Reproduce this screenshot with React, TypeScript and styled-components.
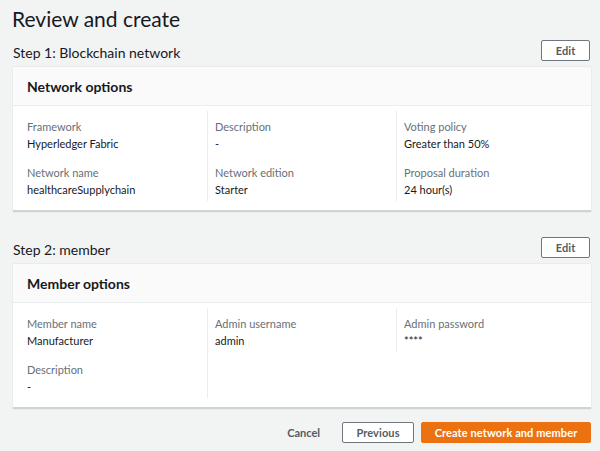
import React from 'react';
import styled, { createGlobalStyle } from 'styled-components';

interface Field {
  label: string;
  value: string;
}

interface Section {
  step: string;
  title: string;
  columns: Field[][];
}

const sections: Section[] = [
  {
    step: 'Step 1: Blockchain network',
    title: 'Network options',
    columns: [
      [
        { label: 'Framework', value: 'Hyperledger Fabric' },
        { label: 'Network name', value: 'healthcareSupplychain' },
      ],
      [
        { label: 'Description', value: '-' },
        { label: 'Network edition', value: 'Starter' },
      ],
      [
        { label: 'Voting policy', value: 'Greater than 50%' },
        { label: 'Proposal duration', value: '24 hour(s)' },
      ],
    ],
  },
  {
    step: 'Step 2: member',
    title: 'Member options',
    columns: [
      [
        { label: 'Member name', value: 'Manufacturer' },
        { label: 'Description', value: '-' },
      ],
      [{ label: 'Admin username', value: 'admin' }],
      [{ label: 'Admin password', value: '****' }],
    ],
  },
];

export default function App() {
  return (
    <>
      <GlobalStyle />
      <Page>
        <PageTitle>Review and create</PageTitle>
        {sections.map((s) => (
          <StepBlock key={s.step}>
            <StepHeader>
              <StepTitle>{s.step}</StepTitle>
              <Button>Edit</Button>
            </StepHeader>
            <Card>
              <CardHeader>{s.title}</CardHeader>
              <CardBody>
                {s.columns.map((col, i) => (
                  <Column key={i} $first={i === 0} $stretch={i < 2}>
                    {col.map((f) => (
                      <Item key={f.label}>
                        <Label>{f.label}</Label>
                        <Value>{f.value}</Value>
                      </Item>
                    ))}
                  </Column>
                ))}
              </CardBody>
            </Card>
          </StepBlock>
        ))}
        <Footer>
          <LinkButton>Cancel</LinkButton>
          <Button $wide>Previous</Button>
          <Button $primary>Create network and member</Button>
        </Footer>
      </Page>
    </>
  );
}

const GlobalStyle = createGlobalStyle`
  html, body {
    margin: 0;
    padding: 0;
    background: #f2f3f3;
  }
  body {
    font-family: Lato, "Open Sans", Arial, sans-serif;
    color: #16191f;
  }
`;

const Page = styled.div`
  padding: 6px 9px 0 13px;
  height: 451px;
  box-sizing: border-box;
`;

const PageTitle = styled.h1`
  margin: 0 0 0 -1px;
  font-size: 21px;
  font-weight: 400;
  line-height: 26px;
  color: #16191f;
`;

const StepBlock = styled.section`
  margin-top: 8px;
  & + & {
    margin-top: 25px;
  }
`;

const StepHeader = styled.div`
  display: flex;
  align-items: flex-end;
  justify-content: space-between;
  padding-right: 1px;
  margin-bottom: 6px;
`;

const StepTitle = styled.h2`
  margin: 0 0 -1px;
  font-size: 14px;
  font-weight: 400;
  line-height: 18px;
`;

const Button = styled.button<{ $primary?: boolean; $wide?: boolean }>`
  height: 21px;
  padding: 0 ${(p) => (p.$primary ? '12px' : '8px')};
  width: ${(p) => (p.$primary ? '170px' : p.$wide ? '72px' : '49px')};
  border-radius: 2px;
  border: 1px solid ${(p) => (p.$primary ? '#ec7211' : '#6f767e')};
  background: ${(p) => (p.$primary ? '#ec7211' : '#fff')};
  color: ${(p) => (p.$primary ? '#fff' : '#545b64')};
  font-family: Lato, "Open Sans", Arial, sans-serif;
  font-size: 11px;
  font-weight: 700;
  letter-spacing: 0.1px;
  cursor: pointer;
`;

const LinkButton = styled.button`
  border: 0;
  background: none;
  padding: 0;
  margin-right: 15px;
  color: #545b64;
  font-family: Lato, "Open Sans", Arial, sans-serif;
  font-size: 11px;
  font-weight: 700;
  cursor: pointer;
`;

const Card = styled.div`
  background: #fff;
  border-bottom: 2px solid #d0d3d3;
  box-shadow: 0 0 1px rgba(0, 28, 36, 0.2);
`;

const CardHeader = styled.div`
  background: #fafafa;
  border-bottom: 1px solid #eaeded;
  height: 38px;
  display: flex;
  align-items: center;
  padding: 0 14px;
  font-size: 14px;
  font-weight: 700;
`;

const CardBody = styled.div`
  display: grid;
  grid-template-columns: 180px 189px 1fr;
  align-items: start;
  padding: 5px 14px 9px;
`;

const Column = styled.div<{ $first?: boolean; $stretch?: boolean }>`
  align-self: ${(p) => (p.$stretch ? 'stretch' : 'start')};
  border-left: ${(p) => (p.$first ? '0' : '1px solid #eaeded')};
  padding: 7px 0 3px ${(p) => (p.$first ? '0' : '7px')};
  display: flex;
  flex-direction: column;
  gap: 12px;
`;

const Item = styled.div`
  display: flex;
  flex-direction: column;
`;

const Label = styled.div`
  font-size: 11px;
  line-height: 17px;
  color: #687078;
`;

const Value = styled.div`
  font-size: 11px;
  line-height: 17px;
  color: #16191f;
`;

const Footer = styled.div`
  display: flex;
  justify-content: flex-end;
  align-items: center;
  gap: 7px;
  margin-top: 13px;
`;
